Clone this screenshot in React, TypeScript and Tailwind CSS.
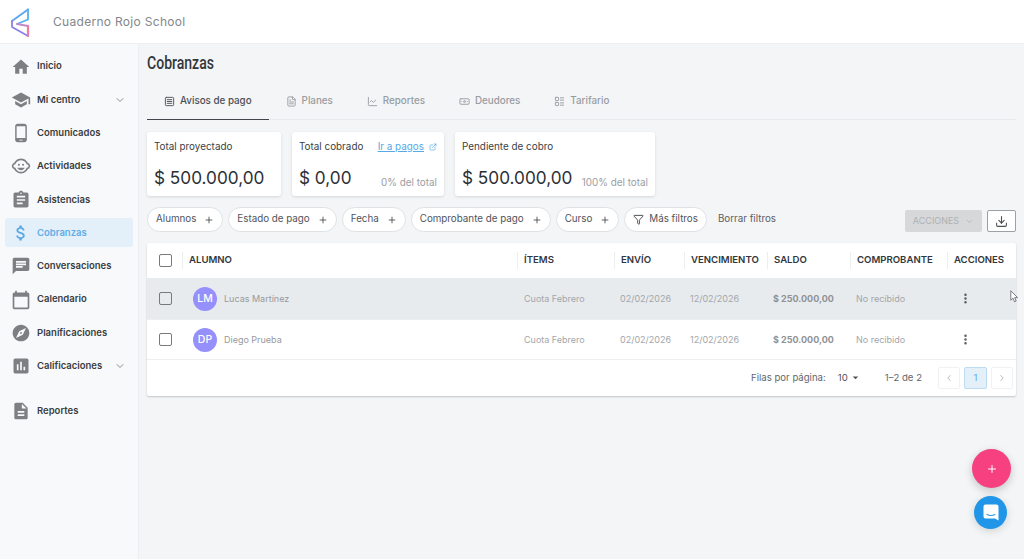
import { Plus, ChevronDown, ChevronLeft, ChevronRight, ExternalLink, Filter, Download, FileText, SquareMenu, LineChart, Banknote, LayoutList, MoreVertical } from 'lucide-react'
import {
  MdHome, MdSchool, MdPhoneAndroid, MdOutlineChildCare, MdAssignment, MdAttachMoney,
  MdChat, MdCalendarToday, MdExplore, MdAssessment, MdDescription, MdArrowDropDown,
} from 'react-icons/md'

const navItems = [
  { label: 'Inicio', icon: MdHome },
  { label: 'Mi centro', icon: MdSchool, chevron: true },
  { label: 'Comunicados', icon: MdPhoneAndroid },
  { label: 'Actividades', icon: MdOutlineChildCare },
  { label: 'Asistencias', icon: MdAssignment },
  { label: 'Cobranzas', icon: MdAttachMoney, active: true },
  { label: 'Conversaciones', icon: MdChat },
  { label: 'Calendario', icon: MdCalendarToday },
  { label: 'Planificaciones', icon: MdExplore },
  { label: 'Calificaciones', icon: MdAssessment, chevron: true },
]

const tabs = [
  { label: 'Avisos de pago', icon: SquareMenu, active: true },
  { label: 'Planes', icon: FileText },
  { label: 'Reportes', icon: LineChart },
  { label: 'Deudores', icon: Banknote },
  { label: 'Tarifario', icon: LayoutList },
]

const chips = ['Alumnos', 'Estado de pago', 'Fecha', 'Comprobante de pago', 'Curso']

const columns = ['ALUMNO', 'ÍTEMS', 'ENVÍO', 'VENCIMIENTO', 'SALDO', 'COMPROBANTE', 'ACCIONES']

const rows = [
  { initials: 'LM', name: 'Lucas Martínez', hover: true, h: 'h-[42px]' },
  { initials: 'DP', name: 'Diego Prueba', hover: false, h: 'h-[40px]' },
]

const gridCols = 'grid grid-cols-[35px_335px_97px_70px_83px_83px_97px_69px]'

function Logo() {
  return (
    <svg width="22" height="30" viewBox="0 0 22 30" fill="none" strokeWidth="1.8" strokeLinejoin="round" strokeLinecap="round">
      <path d="M19 2.5 L3 14" stroke="#5aa6ee" />
      <path d="M19 2.5 L19 12.5 L8 17" stroke="#54b0f0" />
      <path d="M3 14 L3 20 L19 29" stroke="#8a80ea" />
      <path d="M8 17 L19 19" stroke="#c488c8" />
      <path d="M19 19 L19 29" stroke="#ef7aa2" strokeWidth="2.2" />
    </svg>
  )
}

function Checkbox() {
  return <span className="block w-[13px] h-[13px] rounded-[2px] border-[1.5px] border-[#77797c]" />
}

function StatCard({ title, value, note, link, width }: { title: string; value: string; note?: string; link?: boolean; width: string }) {
  return (
    <div className={`${width} h-[64px] bg-white rounded-[3px] shadow-[0_1px_3px_rgba(0,0,0,0.13)] px-[7px] pt-[8px] flex flex-col justify-between pb-[7px]`}>
      <div className="flex items-center justify-between text-[9.9px] leading-[13px] text-[#3b3f45]">
        <span>{title}</span>
        {link && (
          <span className="flex items-center gap-[5px] text-[#58a9e4]">
            <span className="underline">Ir a pagos</span>
            <ExternalLink size={8} />
          </span>
        )}
      </div>
      <div className="flex items-end justify-between">
        <span className="text-[17.2px] leading-[22px] text-[#2c3036]">{value}</span>
        {note && <span className="text-[9.9px] leading-[13px] text-[#9a9ea3]">{note}</span>}
      </div>
    </div>
  )
}

export default function App() {
  return (
    <div className="relative w-full h-[559px] overflow-hidden flex flex-col bg-[#f3f5f7] font-['Inter',sans-serif]">
      {/* Top bar */}
      <header className="h-[44px] shrink-0 bg-white flex items-center pl-[9px] border-b border-[#eef0f2]">
        <Logo />
        <span className="ml-[22px] text-[12px] tracking-[0.3px] text-[#83878b]">Cuaderno Rojo School</span>
      </header>

      <div className="flex flex-1 min-h-0">
        {/* Sidebar */}
        <aside className="w-[139px] shrink-0 bg-[#f8f9fb] border-r border-[#eceef1] px-[5px] pt-[8px]">
          <nav className="flex flex-col gap-[4.3px]">
            {navItems.map(item => (
              <div
                key={item.label}
                className={`h-[29px] flex items-center rounded-[3px] pl-[6px] pr-[7px] ${item.active ? 'bg-[#e3f0f9] text-[#60ade8]' : 'text-[#3a3d40]'}`}
              >
                <item.icon size={20} className={item.active ? 'text-[#5aa9e6]' : 'text-[#7d8083]'} />
                <span className="ml-[6px] text-[9.5px] font-semibold flex-1">{item.label}</span>
                {item.chevron && <ChevronDown size={12} className="text-[#8a8d90]" />}
              </div>
            ))}
            <div className="h-[29px] mt-[12px] flex items-center pl-[6px] text-[#3a3d40]">
              <MdDescription size={20} className="text-[#7d8083]" />
              <span className="ml-[6px] text-[9.5px] font-semibold">Reportes</span>
            </div>
          </nav>
        </aside>

        {/* Main */}
        <main className="flex-1 min-w-0 pl-[8px] pr-[8px]">
          <h1 className="mt-[7px] h-[24px] text-[18px] leading-[24px] font-medium text-[#33373c] origin-left scale-x-[0.78] font-['Roboto',sans-serif]">Cobranzas</h1>

          <div className="mt-[12px] h-[33px] flex border-b border-[#e8eaed]">
            {tabs.map(tab => (
              <div
                key={tab.label}
                className={`h-[33px] px-[17px] pb-[4px] flex items-center gap-[5px] text-[9.8px] font-medium ${tab.active ? 'border-b-[1.5px] border-[#41464c] text-[#4b4f54]' : 'text-[#989ca1]'}`}
              >
                <tab.icon size={11} />
                <span>{tab.label}</span>
              </div>
            ))}
          </div>

          <div className="mt-[12px] flex gap-[11px]">
            <StatCard width="w-[134px]" title="Total proyectado" value="$ 500.000,00" />
            <StatCard width="w-[152px]" title="Total cobrado" value="$ 0,00" note="0% del total" link />
            <StatCard width="w-[200px]" title="Pendiente de cobro" value="$ 500.000,00" note="100% del total" />
          </div>

          <div className="mt-[11px] h-[25px] flex items-center gap-[5px]">
            {chips.map(chip => (
              <div key={chip} className="h-[25px] px-[8px] flex items-center gap-[8px] rounded-full border border-[#dfe2e5] bg-white text-[9.8px] text-[#50545a]">
                <span>{chip}</span>
                <Plus size={10} className="text-[#3f4348]" />
              </div>
            ))}
            <div className="h-[25px] px-[8px] flex items-center gap-[5px] rounded-full border border-[#dfe2e5] bg-white text-[9.8px] text-[#50545a]">
              <Filter size={11} className="text-[#3f4348]" />
              <span>Más filtros</span>
            </div>
            <span className="ml-[6px] text-[9.8px] text-[#5c6065]">Borrar filtros</span>
            <div className="ml-auto flex items-center gap-[5px] mt-[3px]">
              <div className="w-[77px] h-[22px] rounded-[2px] bg-[#d6d8da] flex items-center justify-center gap-[6px] text-[9px] text-[#aeb1b4]">
                ACCIONES
                <ChevronDown size={9} />
              </div>
              <div className="w-[29px] h-[22px] rounded-[2px] border border-[#9da1a5] bg-white flex items-center justify-center">
                <Download size={13} className="text-[#4c5055]" />
              </div>
            </div>
          </div>

          {/* Table */}
          <div className="mt-[11px] bg-white rounded-[2px] shadow-[0_1px_2px_rgba(0,0,0,0.2)]">
            <div className={`${gridCols} h-[35px] items-center`}>
              <div className="pl-[11.5px]"><Checkbox /></div>
              {columns.map(col => (
                <div key={col} className="h-[17px] flex items-center pl-[6px] text-[9.6px] font-semibold text-[#33373c] border-l border-[#eceef0]">
                  {col}
                </div>
              ))}
            </div>
            {rows.map(row => (
              <div key={row.name} className={`${gridCols} ${row.h} items-center border-b border-[#eceef0] text-[9px] text-[#a3a6a9] ${row.hover ? 'bg-[#e8ebee]' : ''}`}>
                <div className="pl-[11.5px]"><Checkbox /></div>
                <div className="pl-[11px] flex items-center gap-[7px]">
                  <span className="w-[24px] h-[24px] rounded-full bg-[#9590fb] text-white text-[10.5px] font-medium flex items-center justify-center">{row.initials}</span>
                  <span className="text-[#98999c]">{row.name}</span>
                </div>
                <div className="pl-[7px]">Cuota Febrero</div>
                <div className="pl-[6px]">02/02/2026</div>
                <div className="pl-[6px]">12/02/2026</div>
                <div className="pl-[6px] font-bold text-[#8f9296]">$ 250.000,00</div>
                <div className="pl-[6px]">No recibido</div>
                <div className="pl-[12px] text-[#55595e]"><MoreVertical size={13} strokeWidth={2.6} /></div>
              </div>
            ))}
            <div className="h-[36px] flex items-center justify-end pr-[3px] text-[9.6px] text-[#63676c]">
              <span>Filas por página:</span>
              <span className="ml-[12px] flex items-center gap-[1px] text-[#4f5358]">10<MdArrowDropDown size={13} /></span>
              <span className="ml-[23px]">1–2 de 2</span>
              <div className="ml-[16px] flex gap-[4px]">
                <span className="w-[22px] h-[22px] rounded-[2px] border border-[#f0f1f3] flex items-center justify-center text-[#a8abae]"><ChevronLeft size={10} /></span>
                <span className="w-[23px] h-[22px] rounded-[2px] border border-[#bcdcf2] bg-[#e3f0f9] flex items-center justify-center text-[#60ade8]">1</span>
                <span className="w-[22px] h-[22px] rounded-[2px] border border-[#f0f1f3] flex items-center justify-center text-[#a8abae]"><ChevronRight size={10} /></span>
              </div>
            </div>
          </div>
        </main>
      </div>

      {/* Floating buttons */}
      <div className="absolute left-[972px] top-[449px] w-[39px] h-[39px] rounded-full bg-[#f6407f] shadow-[0_3px_8px_rgba(0,0,0,0.2)] flex items-center justify-center">
        <Plus size={12} className="text-white" />
      </div>
      <div className="absolute left-[974px] top-[496px] w-[33px] h-[33px] rounded-full bg-[#2196e8] shadow-[0_2px_8px_rgba(0,0,0,0.15)] flex items-center justify-center">
        <svg width="16" height="17" viewBox="0 0 16 17" fill="none">
          <path d="M2.5 0.5 H13.5 A2 2 0 0 1 15.5 2.5 V16.5 L12 14.5 H2.5 A2 2 0 0 1 0.5 12.5 V2.5 A2 2 0 0 1 2.5 0.5 Z" fill="white" />
          <path d="M4 10.5 Q8 12.5 12 10.5" stroke="#2196e8" strokeWidth="1.1" strokeLinecap="round" />
        </svg>
      </div>

      {/* Mouse cursor */}
      <svg className="absolute left-[1010px] top-[290px]" width="9" height="13" viewBox="0 0 9 13" fill="white" stroke="#6d7074" strokeWidth="0.9">
        <path d="M0.8 0.8 V10.2 L3 8.2 L4.6 11.8 L6.2 11 L4.7 7.6 H7.6 Z" />
      </svg>
    </div>
  )
}
